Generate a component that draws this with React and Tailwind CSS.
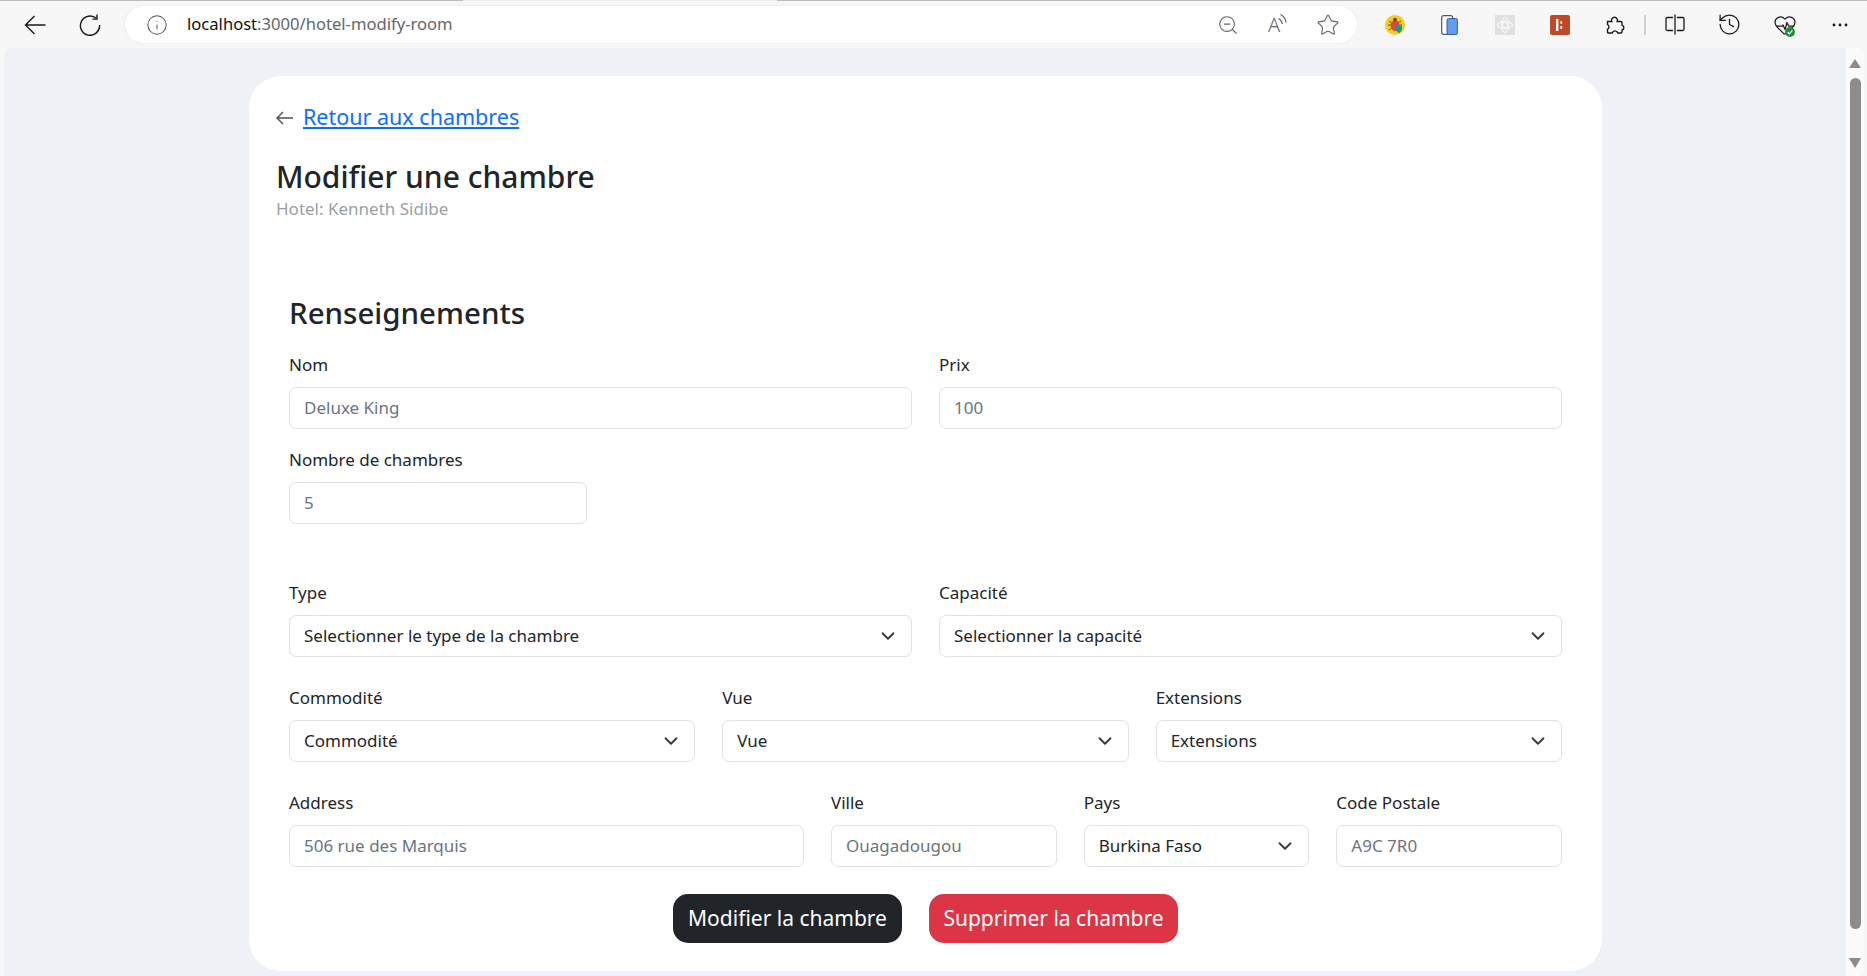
import React from 'react';
import { Info, ZoomOut, Star, History, HeartPulse, ChevronDown } from 'lucide-react';

const Field = ({ label, value, className = '' }) => (
  <div className={`flex flex-col ${className}`}>
    <label className="text-[17px] leading-[25px] text-[#212529] h-[25px] mb-[10px]">{label}</label>
    <div className="h-[42px] border border-[#dee2e6] rounded-[7px] bg-white px-[14px] flex items-center text-[17px] text-[#6c757d]">{value}</div>
  </div>
);

const SelectField = ({ label, value, className = '' }) => (
  <div className={`flex flex-col ${className}`}>
    <label className="text-[17px] leading-[25px] text-[#212529] h-[25px] mb-[10px]">{label}</label>
    <div className="h-[42px] border border-[#dee2e6] rounded-[7px] bg-white pl-[14px] pr-[12px] flex items-center justify-between text-[17px] text-[#212529]">
      <span>{value}</span>
      <ChevronDown size={22} strokeWidth={2} className="text-[#343a40]" />
    </div>
  </div>
);

const ToolIcon = ({ children }) => <div className="relative w-[55px] h-[47px] flex items-center justify-center shrink-0">{children}</div>;

// ── Browser toolbar drawings ─────────────────────────────────────────────────
const BackArrow = () => (
  <svg width="22" height="20" viewBox="0 0 22 20" fill="none" stroke="#1a1a1a" strokeWidth="1.4">
    <path d="M1.5 10h20M10.5 1 1.5 10l9 9" />
  </svg>
);

const Reload = () => (
  <svg width="22" height="22" viewBox="0 0 22 22" fill="none" stroke="#1a1a1a" strokeWidth="1.4">
    <path d="M17.5 4.6A9.6 9.6 0 1 0 20.6 11" />
    <path d="M18 0.5v4.6h-4.6" />
  </svg>
);

const ReadAloud = () => (
  <div className="flex items-start h-[28px] w-[24px]">
    <span className="text-[20px] leading-[28px] font-light text-[#666] ml-[1px]">A</span>
    <svg width="9" height="12" viewBox="0 0 9 12" fill="none" stroke="#666" strokeWidth="1.2" className="mt-[3px] -ml-[2px]">
      <path d="M0.500 4.500c2 1 3.400 3 3.900 5.500M2.500 0.500c3 1.500 5 4.500 5.500 8" />
    </svg>
  </div>
);

const BugExt = () => (
  <svg width="20" height="20" viewBox="0 0 20 20">
    <circle cx="10" cy="10" r="10" fill="#f8cc1b" />
    <path d="M4 6l3 2M16 6l-3 2M3 10h4M17 10h-4M4 15l3-2M16 15l-3-2" stroke="#6b4a2a" strokeWidth="1" />
    <ellipse cx="10" cy="10.500" rx="4.200" ry="5.500" fill="#d8474a" />
    <circle cx="10" cy="4.500" r="1.800" fill="#6b3a2a" />
    <path d="M11 11h6v3c0 2-1.500 3.500-3 4-1.500-.5-3-2-3-4z" fill="#0f9d80" />
  </svg>
);

const PhoneExt = () => (
  <svg width="17" height="20" viewBox="0 0 17 20">
    <rect x="0.7" y="0.7" width="11" height="18.600" rx="2" fill="#fff" stroke="#4a5a78" strokeWidth="1.200" />
    <rect x="6" y="3.500" width="10.400" height="16" rx="1.600" fill="#5f9df5" stroke="#3f5f92" strokeWidth="1" />
  </svg>
);

const GrayExt = () => (
  <svg width="20" height="20" viewBox="0 0 20 20">
    <rect width="20" height="20" fill="#e0e0e0" />
    <g fill="none" stroke="#f6f6f6" strokeWidth="1.200">
      <circle cx="10" cy="10" r="2.600" />
      <ellipse cx="10" cy="10" rx="7.500" ry="3.400" />
      <ellipse cx="10" cy="10" rx="3.400" ry="7.500" />
    </g>
  </svg>
);

const RedExt = () => (
  <svg width="20" height="20" viewBox="0 0 20 20">
    <rect width="20" height="20" rx="2" fill="#c04a28" />
    <rect x="6" y="4" width="2.400" height="12" fill="#fff" />
    <rect x="10.500" y="6" width="1.600" height="3" fill="#fff" />
    <rect x="10.500" y="11" width="1.600" height="3" fill="#fff" />
  </svg>
);

const PuzzleIcon = () => (
  <svg width="20" height="20" viewBox="0 0 20 20" fill="none" stroke="#1a1a1a" strokeWidth="1.400">
    <path d="M2.500 6.500h4.300a3 3 0 1 1 5.400 0H16a1 1 0 0 1 1 1v2.600a2.600 2.600 0 0 1 0 5V17a1 1 0 0 1-1 1h-3.200a2.900 2.900 0 0 0-5.600 0H3.500a1 1 0 0 1-1-1v-2.700a2.700 2.700 0 0 0 0-4.800z" />
  </svg>
);

const SplitIcon = () => (
  <svg width="20" height="21" viewBox="0 0 20 21" fill="none" stroke="#1a1a1a" strokeWidth="1.300">
    <path d="M8 3.500H2.500a1.500 1.500 0 0 0-1.500 1.500v10a1.500 1.500 0 0 0 1.500 1.500H8" />
    <path d="M12 3.500h5.500a1.500 1.500 0 0 1 1.500 1.500v10a1.500 1.500 0 0 1-1.500 1.500H12" />
    <path d="M10 0.500v20" />
  </svg>
);

const App = () => {
  return (
    <div className="w-[1867px] h-[976px] overflow-hidden flex flex-col bg-[#f7f7f7] font-['Noto_Sans',sans-serif]">
      {/* window top edge */}
      <div className="h-px flex shrink-0 bg-[#f0f0f0]">
        <div className="w-[463px] bg-[#bcbcbc]" />
        <div className="ml-[314px] flex-1 bg-[#bcbcbc]" />
      </div>

      {/* browser toolbar */}
      <div className="h-[47px] flex items-center shrink-0">
        <div className="w-[125px] flex items-center shrink-0">
          <div className="ml-[24px] w-[22px] flex justify-center"><BackArrow /></div>
          <div className="ml-[33px] w-[22px] flex justify-center"><Reload /></div>
        </div>
        <div className="w-[1232px] h-[37px] bg-white rounded-full flex items-center shrink-0 shadow-[0_0_3px_rgba(0,0,0,0.08)]">
          <Info size={22} strokeWidth={1.1} className="ml-[21px] text-[#555]" />
          <div className="ml-[19px] text-[16.6px] text-[#666]"><span className="text-[#111]">localhost</span>:3000/hotel-modify-room</div>
          <div className="ml-auto flex items-center pr-[17px] text-[#666]">
            <ZoomOut size={22} strokeWidth={1.2} className="mr-[2px]" />
            <div className="ml-[26px]"><ReadAloud /></div>
            <Star size={24} strokeWidth={1.1} className="ml-[25px]" />
          </div>
        </div>
        <div className="flex items-center ml-[10px]">
          <ToolIcon><BugExt /></ToolIcon>
          <ToolIcon><PhoneExt /></ToolIcon>
          <ToolIcon><GrayExt /></ToolIcon>
          <ToolIcon><RedExt /></ToolIcon>
          <ToolIcon><PuzzleIcon /></ToolIcon>
          <div className="w-[5px] flex justify-center shrink-0"><div className="w-[2px] h-[20px] bg-[#d0d0d0]" /></div>
          <ToolIcon><SplitIcon /></ToolIcon>
          <ToolIcon><History size={25} strokeWidth={1.25} className="text-[#1a1a1a]" /></ToolIcon>
          <ToolIcon>
            <HeartPulse size={24} strokeWidth={1.25} className="text-[#1a1a1a]" />
            <svg width="10" height="10" viewBox="0 0 10 10" className="absolute left-[28px] top-[26px]">
              <circle cx="5" cy="5" r="5" fill="#1e8e3e" />
              <path d="M2.600 5.200 4.300 6.800 7.400 3.400" fill="none" stroke="#fff" strokeWidth="1.200" />
            </svg>
          </ToolIcon>
          <ToolIcon>
            <svg width="16" height="4" viewBox="0 0 16 4" fill="#1a1a1a">
              <circle cx="2" cy="2" r="1.400" />
              <circle cx="8" cy="2" r="1.400" />
              <circle cx="14" cy="2" r="1.400" />
            </svg>
          </ToolIcon>
        </div>
      </div>

      {/* page viewport */}
      <div className="flex-1 flex pl-[4px] pr-[3px] min-h-0">
        <div className="flex-1 bg-[#eef1f6] rounded-tl-[6px] pt-[28px] pl-[245px]">
          <div className="w-[1353px] h-[895px] bg-white rounded-[32px] pt-[26px] px-[27px]">
            <div className="flex items-center h-[31px]">
              <svg width="17" height="14" viewBox="0 0 17 14" fill="none" stroke="#495057" strokeWidth="1.400">
                <path d="M1 7h16M7 1 1 7l6 6" />
              </svg>
              <a href="#" className="ml-[10px] text-[21.5px] text-[#0d6efd] underline">Retour aux chambres</a>
            </div>
            <h1 className="mt-[25px] text-[30px] leading-[38px] font-medium text-[#212529]">Modifier une chambre</h1>
            <p className="mt-px text-[17px] leading-[24px] text-[#9a9fa5]">Hotel: Kenneth Sidibe</p>

            <div className="mt-[72px] px-[13px]">
              <h2 className="text-[29.500px] leading-[40px] font-medium text-[#212529] mb-[19px]">Renseignements</h2>
              <div className="flex gap-[27px]">
                <Field className="flex-1" label="Nom" value="Deluxe King" />
                <Field className="flex-1" label="Prix" value="100" />
              </div>
              <Field className="w-[298px] mt-[18px]" label="Nombre de chambres" value="5" />
              <div className="flex gap-[27px] mt-[56px]">
                <SelectField className="flex-1" label="Type" value="Selectionner le type de la chambre" />
                <SelectField className="flex-1" label="Capacité" value="Selectionner la capacité" />
              </div>
              <div className="flex gap-[27px] mt-[28px]">
                <SelectField className="flex-1" label="Commodité" value="Commodité" />
                <SelectField className="flex-1" label="Vue" value="Vue" />
                <SelectField className="flex-1" label="Extensions" value="Extensions" />
              </div>
              <div className="flex gap-[27px] mt-[28px]">
                <Field className="w-[515px]" label="Address" value="506 rue des Marquis" />
                <Field className="flex-1" label="Ville" value="Ouagadougou" />
                <SelectField className="flex-1" label="Pays" value="Burkina Faso" />
                <Field className="flex-1" label="Code Postale" value="A9C 7R0" />
              </div>
              <div className="flex justify-center gap-[27px] mt-[27px]">
                <button className="h-[49px] w-[229px] rounded-[15px] bg-[#212529] text-white text-[21px]">Modifier la chambre</button>
                <button className="h-[49px] w-[249px] rounded-[15px] bg-[#dc3545] text-white text-[21px]">Supprimer la chambre</button>
              </div>
            </div>
          </div>
        </div>

        {/* scrollbar */}
        <div className="w-[18px] bg-[#fbfbfb] rounded-tr-[8px] rounded-br-[8px] flex flex-col items-center shrink-0">
          <div className="mt-[11px] w-0 h-0 border-l-[6px] border-r-[6px] border-b-[9px] border-l-transparent border-r-transparent border-b-[#8c8c8c]" />
          <div className="mt-[10px] w-[11px] h-[851px] rounded-full bg-[#8c8c8c]" />
          <div className="mt-[29px] w-0 h-0 border-l-[6px] border-r-[6px] border-t-[10px] border-l-transparent border-r-transparent border-t-[#8c8c8c]" />
        </div>
      </div>
    </div>
  );
};

export default App;
